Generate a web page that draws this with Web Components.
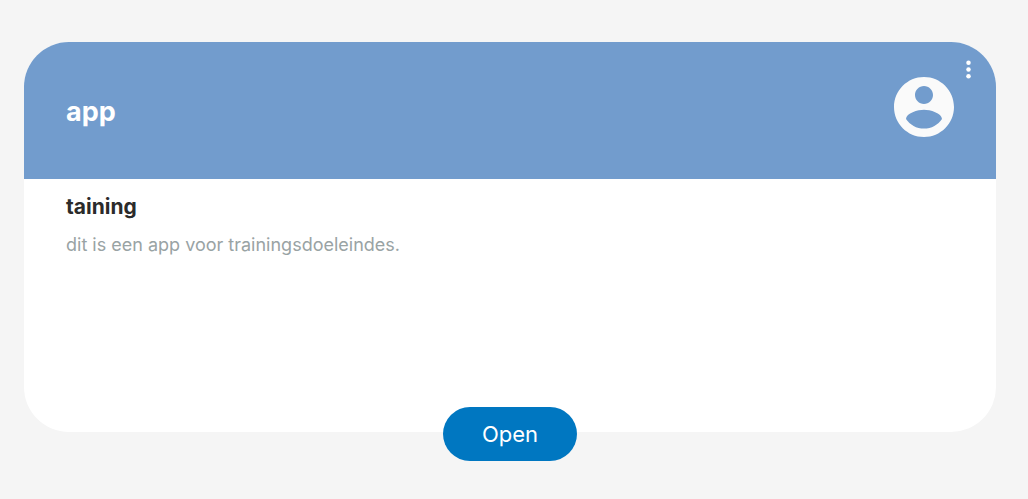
<!DOCTYPE html>
<html lang="nl">
<head>
<meta charset="utf-8">
<meta name="viewport" content="width=device-width, initial-scale=1">
<title>app</title>
<style>
body { margin: 0; background: #f5f5f5; font-family: Inter, "Open Sans", sans-serif; }
</style>
</head>
<body>
<app-card>
  <span slot="name">app</span>
  <user-avatar slot="avatar"></user-avatar>
  <more-menu slot="menu"></more-menu>
  <span slot="title">taining</span>
  <span slot="description">dit is een app voor trainingsdoeleindes.</span>
  <pill-button slot="action">Open</pill-button>
</app-card>
<script>
const define = (name, html) => {
  const template = document.createElement('template');
  template.innerHTML = html;
  customElements.define(name, class extends HTMLElement {
    constructor() {
      super();
      this.attachShadow({ mode: 'open' }).append(template.content.cloneNode(true));
    }
  });
};

define('user-avatar', `
<style>
:host { display: block; color: #fafafa; }
svg { display: block; width: 72px; height: 72px; fill: currentColor; }
</style>
<svg viewBox="0 0 24 24" aria-hidden="true"><path d="M12 2C6.48 2 2 6.48 2 12s4.48 10 10 10 10-4.480 10-10S17.52 2 12 2zm0 3c1.66 0 3 1.34 3 3s-1.34 3-3 3-3-1.340-3-3 1.340-3 3-3zm0 14.200c-2.500 0-4.710-1.280-6-3.220.03-1.990 4-3.080 6-3.080 1.990 0 5.970 1.090 6 3.080-1.290 1.940-3.500 3.220-6 3.220z"/></svg>`);

define('more-menu', `
<style>
:host { display: block; color: #fff; }
button { display: block; margin: 0; padding: 0; border: 0; background: none; color: inherit; cursor: pointer; }
svg { display: block; width: 27px; height: 27px; fill: currentColor; }
</style>
<button type="button" aria-label="Menu"><svg viewBox="0 0 24 24" aria-hidden="true"><circle cx="12" cy="6" r="2"/><circle cx="12" cy="12" r="2"/><circle cx="12" cy="18" r="2"/></svg></button>`);

define('pill-button', `
<style>
:host { display: block; }
button { display: block; margin: 0; padding: 12px 39px; border: 0; border-radius: 27px; background: #0077c1; color: #fff; font: 400 22px/30px Inter, "Open Sans", sans-serif; cursor: pointer; }
</style>
<button type="button"><slot></slot></button>`);

define('app-card', `
<style>
:host { display: block; padding: 42px 32px 38px 24px; }
article { display: flex; flex-direction: column; border-radius: 45px; background: #fff; }
header { position: relative; display: flex; align-items: flex-start; justify-content: space-between; padding: 29px 36px 36px 42px; border-radius: 45px 45px 0 0; background: #729ccd; }
h1, h2, p { margin: 0; }
h1 { padding-top: 25px; color: #fff; font-size: 27px; line-height: 32px; font-weight: 700; }
.menu { position: absolute; top: 14px; right: 14px; }
.body { min-height: 214px; padding: 14px 42px 0; }
h2 { color: #2b2b2b; font-size: 21px; line-height: 28px; font-weight: 700; }
p { padding-top: 12px; color: #99a3a4; font-size: 18px; line-height: 24px; }
footer { display: flex; justify-content: center; margin-bottom: -29px; }
</style>
<article>
  <header>
    <h1><slot name="name"></slot></h1>
    <slot name="avatar"></slot>
    <div class="menu"><slot name="menu"></slot></div>
  </header>
  <div class="body">
    <h2><slot name="title"></slot></h2>
    <p><slot name="description"></slot></p>
  </div>
  <footer><slot name="action"></slot></footer>
</article>`);
</script>
</body>
</html>
